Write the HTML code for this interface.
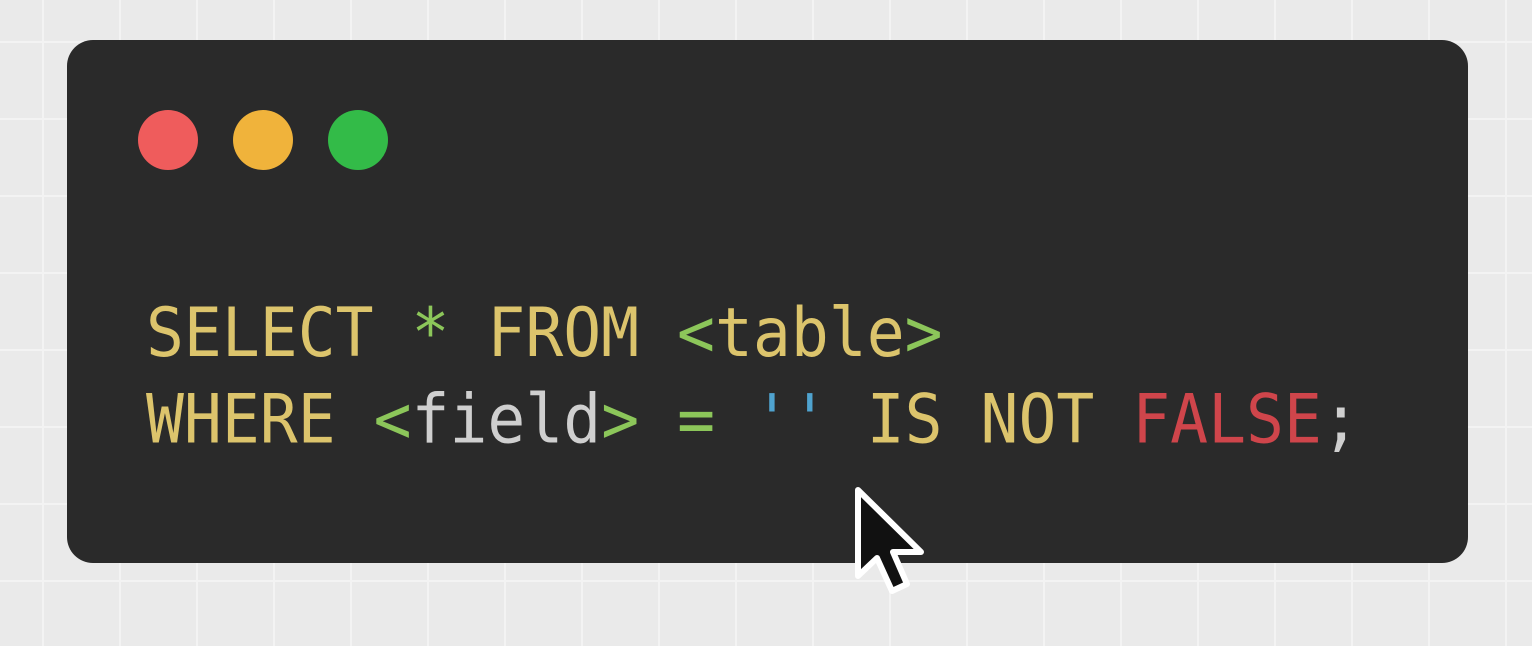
<!DOCTYPE html>
<html><head><meta charset="utf-8"><style>
html,body{margin:0;padding:0;width:1532px;height:646px;overflow:hidden}
body{background-color:#eaeaea;background-image:linear-gradient(90deg,#f3f3f3 2px,transparent 2px),linear-gradient(#f3f3f3 2px,transparent 2px);background-size:77px 77px;background-position:42px 41px;position:relative}
.card{position:absolute;left:67px;top:40px;width:1401px;height:523px;background:#2a2a2a;border-radius:26px}
.dot{position:absolute;top:110px;width:60px;height:60px;border-radius:50%}
.code{position:absolute;left:146px;top:0;font-family:"DejaVu Sans Mono","Liberation Mono",monospace;font-size:63px;white-space:pre;line-height:80px;transform-origin:0 0;transform:scaleY(1.08)}
.y{color:#dcc46c}.g{color:#8cc65a}.w{color:#cfcfcf}.b{color:#4fa3cf}.r{color:#cf454b}
</style></head><body>
<div class="card"></div>
<div class="dot" style="left:138px;background:#ef5c5c"></div>
<div class="dot" style="left:233px;background:#f0b33b"></div>
<div class="dot" style="left:328px;background:#33bb48"></div>
<div class="code" style="top:290px"><span class="y">SELECT</span> <span class="g">*</span> <span class="y">FROM</span> <span class="g">&lt;</span><span class="y">table</span><span class="g">&gt;</span>
<span class="y">WHERE</span> <span class="g">&lt;</span><span class="w">field</span><span class="g">&gt;</span> <span class="g">=</span> <span class="b">''</span> <span class="y">IS NOT</span> <span class="r">FALSE</span><span class="w">;</span></div>
<svg style="position:absolute;left:845px;top:480px" width="95" height="125" viewBox="0 0 95 125">
<path d="M13 10 L13 96 L32 78 L47 111 L62 104 L48 72 L76 72 Z" fill="#111" stroke="#fff" stroke-width="6" stroke-linejoin="round"/>
</svg>
</body></html>
